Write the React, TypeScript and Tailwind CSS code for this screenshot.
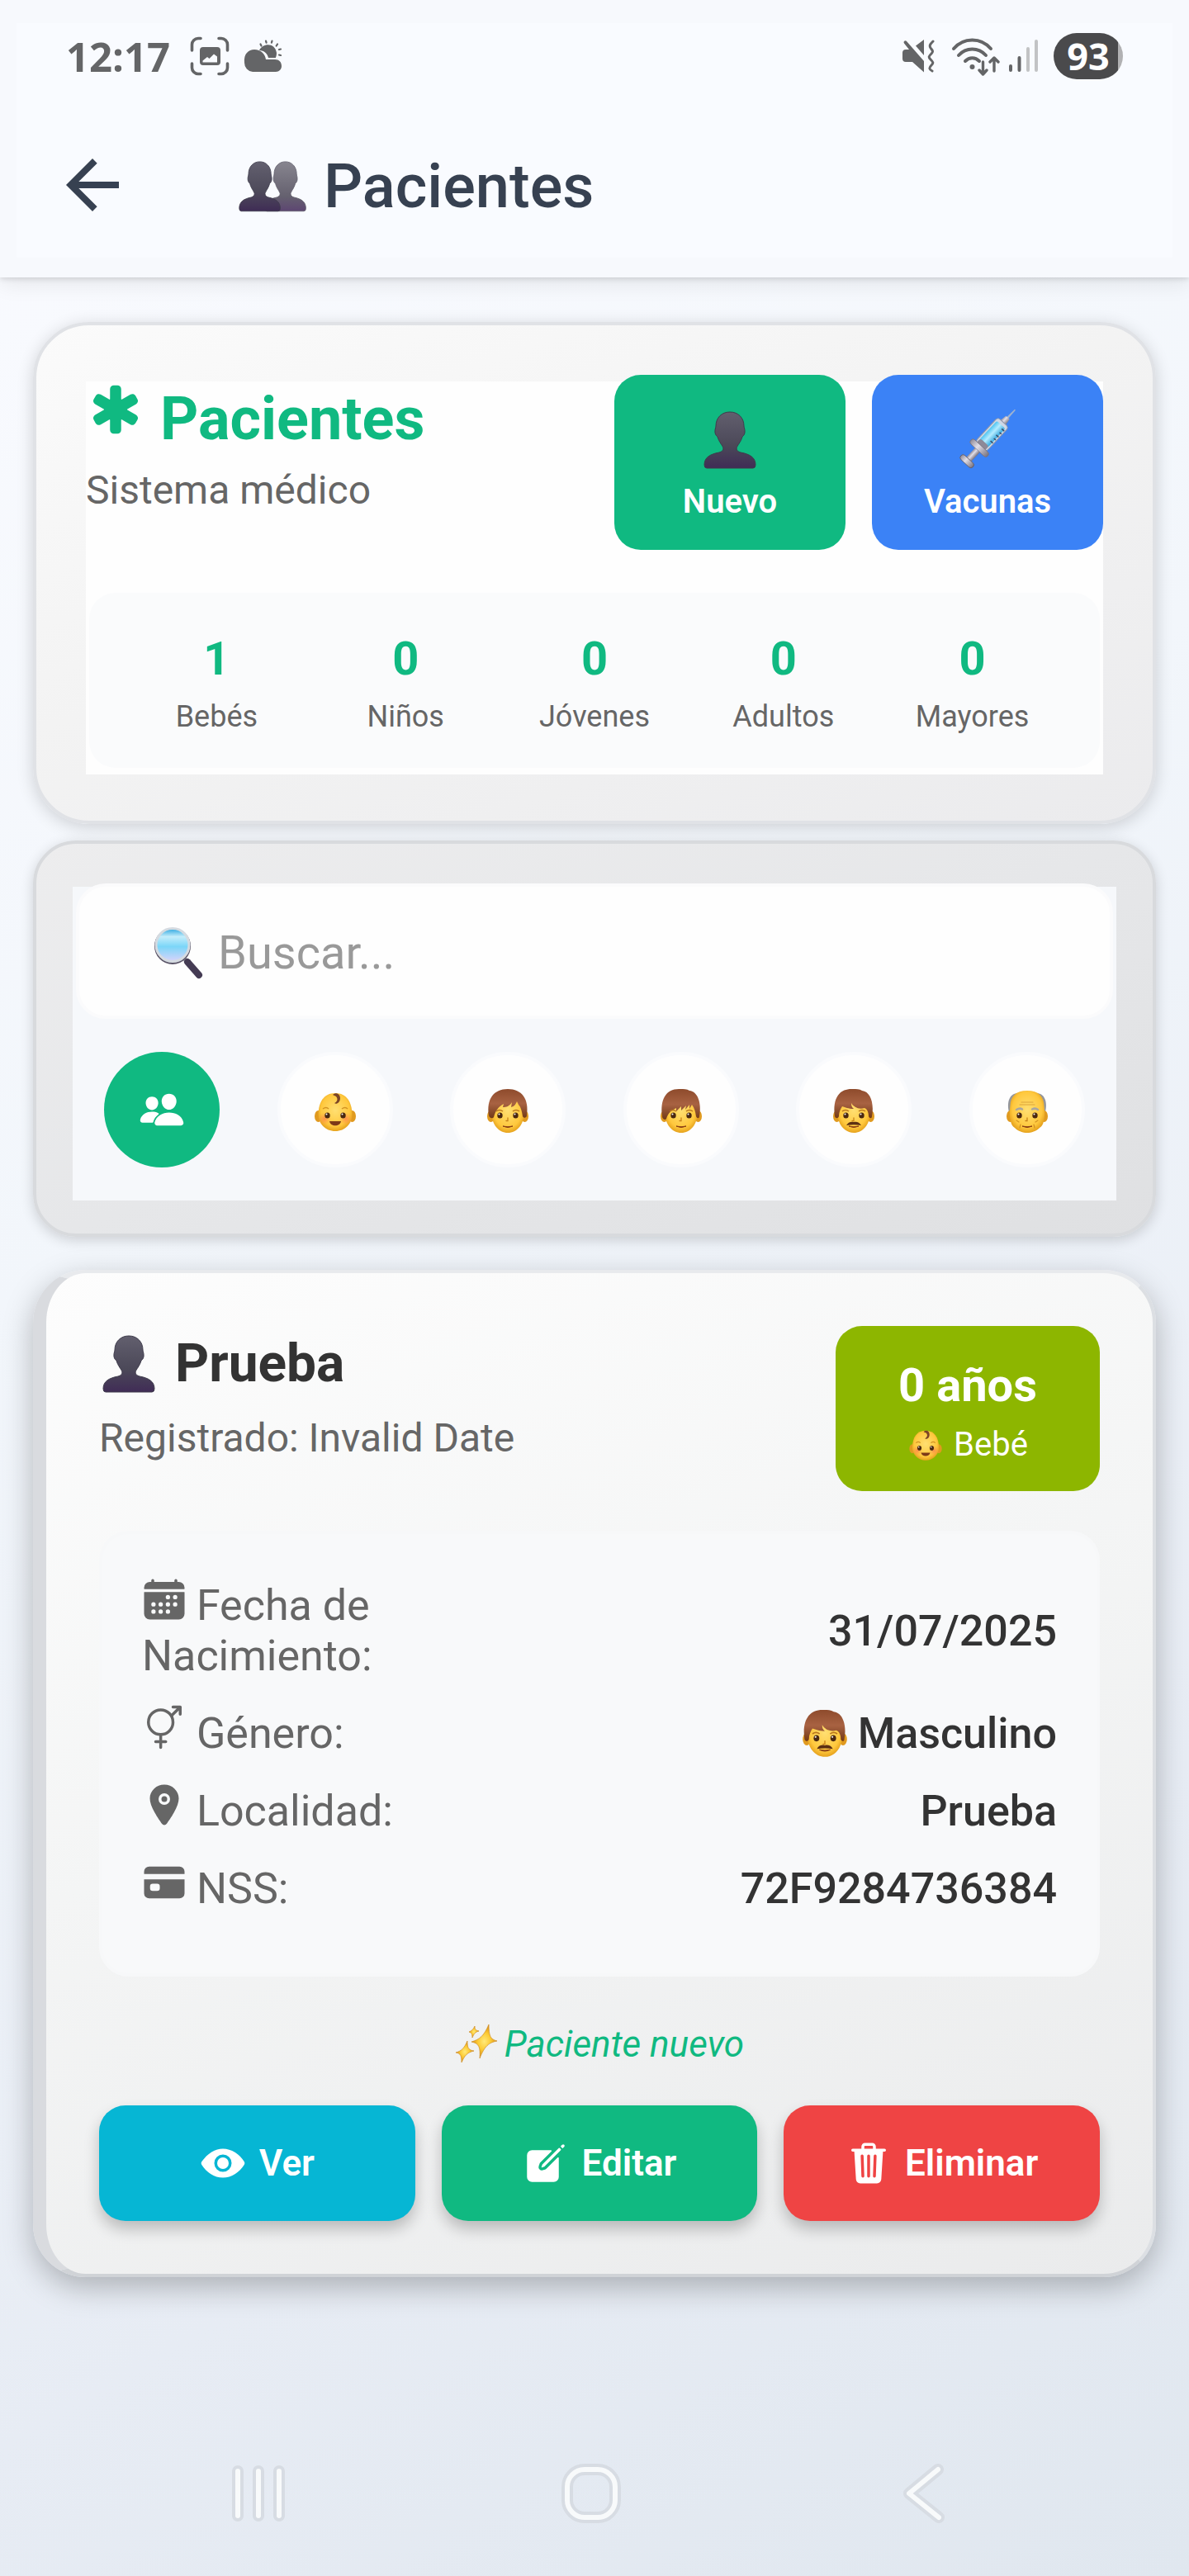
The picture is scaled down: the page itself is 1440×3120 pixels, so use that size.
import React from "react";
import { MdArrowBack } from "react-icons/md";
import {
  IoCalendar,
  IoCard,
  IoCreate,
  IoEye,
  IoLocation,
  IoMaleFemaleOutline,
  IoMedical,
  IoPeople,
  IoTrash,
} from "react-icons/io5";

/* ---------- status bar drawings ---------- */

function CaptureIcon() {
  return (
    <svg className="h-12 w-12" viewBox="0 0 48 48" fill="none" aria-hidden="true">
      <path
        d="M2.500 17V10a7.500 7.500 0 0 1 7.500-7.500h3M35 2.500h3a7.500 7.500 0 0 1 7.500 7.500v7M45.500 33v5a7.500 7.500 0 0 1-7.500 7.500h-3M13 45.500h-3A7.500 7.500 0 0 1 2.500 38v-5"
        stroke="#646567"
        strokeWidth="3.600"
        strokeLinecap="round"
      />
      <path
        fillRule="evenodd"
        d="M16 13h17a4 4 0 0 1 4 4v14a4 4 0 0 1-4 4H16a4 4 0 0 1-4-4V17a4 4 0 0 1 4-4Zm-.500 18.500H33v-7l-4-3-5.500 5.500-2.500-2-5.500 4.500Z"
        fill="#646567"
      />
    </svg>
  );
}

function WeatherIcon() {
  return (
    <svg className="h-10 w-12" viewBox="0 0 48 40" aria-hidden="true">
      <path d="M20 13c4-9 19-10 21 3 0 2-.300 4-1.200 6H31c-1-5-5-9-11-9Z" fill="#646567" />
      <path d="M12 39a11 11 0 0 1-10-11C1 17 7 12 14 12c8 0 13 5 14 12h11c5 0 8 3 8 8 0 4-3 7-7 7Z" fill="#646567" />
      <path
        d="M21.500 5.500l1 2M28 1.500l.6 2.200M35.500 1.500l-.6 2.200M42 5.500l-1.300 2M46 11.500l-2 .5M46 19l-2-.500"
        stroke="#646567"
        strokeWidth="2.200"
        strokeLinecap="round"
      />
    </svg>
  );
}

function MuteIcon() {
  return (
    <svg className="h-10 w-10" viewBox="0 0 40 40" fill="none" aria-hidden="true">
      <path d="M17 7.500 27 0v19L17 7.500Z" fill="#646567" />
      <path d="M5 12h4L3 4.500a1.800 1.800 0 0 1 3-2.500l21 24v13.500L13 27H5a4 4 0 0 1-4-4v-7a4 4 0 0 1 4-4Z" fill="#646567" />
      <path
        d="M38 2c-3 3-5 5-3 8s4 4 1 7-4 4-1 7 4 4 1 7-3 5 1 7"
        stroke="#646567"
        strokeWidth="3"
        strokeLinecap="round"
      />
    </svg>
  );
}

function WifiIcon() {
  return (
    <svg className="h-12 w-15" viewBox="0 0 60 48" fill="none" stroke="#646567" strokeLinecap="round" aria-hidden="true">
      <path d="M3 15C15 1 36 1 48 15M9 23c9-10 24-10 33 0M17 30c5-5 12-5 17 0" strokeWidth="4" />
      <circle cx="25.500" cy="37" r="3" fill="#646567" stroke="none" />
      <path d="M38.500 31v14M34 41l4.500 5 4.500-5M52 42V27M47 31l5-5 5 5" strokeWidth="3.400" strokeLinejoin="round" />
    </svg>
  );
}

function SignalIcon() {
  return (
    <svg className="h-10 w-10" viewBox="0 0 40 40" fill="none" strokeWidth="4" strokeLinecap="round" aria-hidden="true">
      <path d="M4 32v5M14.500 22v15" stroke="#646567" />
      <path d="M25 11v26M35 2v35" stroke="#c2c3c5" />
    </svg>
  );
}

function StatusBar() {
  return (
    <div className="flex h-14 items-center justify-between">
      <div className="flex items-center">
        <span className="font-['Open_Sans',sans-serif] text-[49px] leading-14 font-bold text-[#646567]">12:17</span>
        <span className="ml-6">
          <CaptureIcon />
        </span>
        <span className="ml-4">
          <WeatherIcon />
        </span>
      </div>
      <div className="flex items-center">
        <MuteIcon />
        <span className="ml-5">
          <WifiIcon />
        </span>
        <span className="ml-2">
          <SignalIcon />
        </span>
        <span className="ml-4 flex h-14 w-21 items-center justify-center rounded-full bg-[linear-gradient(90deg,#4a4a4c_93%,#b1b1b3_93%)] font-['Open_Sans',sans-serif] text-[45px] leading-14 font-bold text-white">
          93
        </span>
      </div>
    </div>
  );
}

/* ---------- emoji drawings ---------- */

const BUST =
  "M32 1C22 1 15 8 15 18c0 2-1.500 4-1 8 .5 3 2 4 3 5 2 7 6 10 7 14 0 3-2 4-5 5C8 52 1 56 1 65q0 4 3 4h56q3 0 3-4c0-9-7-13-18-15-3-1-5-2-5-5 1-4 5-7 7-14 1-1 2.500-2 3-5 .500-4-1-6-1-8C49 8 42 1 32 1Z";

function BustEmoji({ className }: { className: string }) {
  return (
    <svg className={className} viewBox="0 0 64 70" aria-hidden="true">
      <defs>
        <linearGradient id="bust" x1="0" y1="0" x2="0" y2="1">
          <stop offset="0" stopColor="#625f6e" />
          <stop offset="0.600" stopColor="#4b4858" />
          <stop offset="1" stopColor="#402c56" />
        </linearGradient>
      </defs>
      <path d={BUST} fill="url(#bust)" stroke="#3e3b4b" strokeWidth="1" />
    </svg>
  );
}

function BustsEmoji() {
  return (
    <svg className="h-16 w-[84px]" viewBox="0 0 84 64" aria-hidden="true">
      <defs>
        <linearGradient id="busts-back" x1="0" y1="0" x2="0" y2="1">
          <stop offset="0" stopColor="#87858f" />
          <stop offset="0.700" stopColor="#65616f" />
          <stop offset="1" stopColor="#5d4672" />
        </linearGradient>
        <linearGradient id="busts-front" x1="0" y1="0" x2="0" y2="1">
          <stop offset="0" stopColor="#63606f" />
          <stop offset="0.600" stopColor="#4d4a5a" />
          <stop offset="1" stopColor="#3f2c55" />
        </linearGradient>
      </defs>
      <g transform="translate(32 1) scale(0.800 0.880)">
        <path d={BUST} fill="url(#busts-back)" stroke="#625f6d" />
      </g>
      <g transform="translate(1 1) scale(0.800 0.880)">
        <path d={BUST} fill="url(#busts-front)" stroke="#3e3b4b" />
      </g>
    </svg>
  );
}

function SyringeEmoji() {
  return (
    <svg className="h-19 w-19" viewBox="0 0 76 76" aria-hidden="true">
      <defs>
        <linearGradient id="serum" x1="0" y1="0" x2="1" y2="0">
          <stop offset="0" stopColor="#4cc4f2" />
          <stop offset="0.450" stopColor="#b5ecff" />
          <stop offset="1" stopColor="#37a9df" />
        </linearGradient>
        <linearGradient id="steel" x1="0" y1="0" x2="1" y2="0">
          <stop offset="0" stopColor="#8f8b99" />
          <stop offset="0.400" stopColor="#e2dfe8" />
          <stop offset="1" stopColor="#77727f" />
        </linearGradient>
      </defs>
      <g transform="rotate(43 38 38)">
        <path d="M37.300 -11h1.400L39.500 6h-3Z" fill="#9fb3cf" />
        <path d="M35 2h6l1.500 9h-9Z" fill="url(#steel)" />
        <rect x="29" y="10" width="18" height="40" rx="4" fill="#cfd8e6" stroke="#8f97aa" />
        <rect x="31" y="14" width="14" height="31" rx="2" fill="url(#serum)" />
        <path d="M46 17h-4M46 22h-3M46 27h-4M46 32h-3M46 37h-4" stroke="#3b4c68" strokeWidth="1.500" />
        <rect x="31" y="43" width="14" height="8" rx="3" fill="#8d8998" />
        <rect x="24" y="49" width="28" height="7" rx="3.500" fill="url(#steel)" stroke="#77737f" strokeWidth="0.800" />
        <rect x="34" y="56" width="8" height="16" fill="url(#steel)" />
        <rect x="28" y="71" width="20" height="7" rx="3.500" fill="url(#steel)" stroke="#5f5a68" strokeWidth="0.800" />
      </g>
    </svg>
  );
}

function SearchEmoji() {
  return (
    <svg className="h-16 w-16" viewBox="0 0 64 64" aria-hidden="true">
      <defs>
        <linearGradient id="lens" x1="0" y1="0" x2="0" y2="1">
          <stop offset="0" stopColor="#2aa5df" />
          <stop offset="0.250" stopColor="#c4edfb" />
          <stop offset="0.550" stopColor="#7bd6f8" />
          <stop offset="1" stopColor="#d9d3fb" />
        </linearGradient>
      </defs>
      <path d="m38 38 6 6" stroke="#a4a4ac" strokeWidth="5" />
      <path d="m43 43 14 16" stroke="#443b53" strokeWidth="8" strokeLinecap="round" />
      <circle cx="25" cy="24" r="20.500" fill="none" stroke="#5b5568" strokeWidth="3" />
      <circle cx="25" cy="22.500" r="20" fill="url(#lens)" stroke="#d5dbe1" strokeWidth="3" />
    </svg>
  );
}

type FaceKind = "baby" | "child" | "young" | "adult" | "elder";

function FaceEmoji({ kind, className }: { kind: FaceKind; className: string }) {
  return (
    <svg className={className} viewBox="0 0 52 56" aria-hidden="true">
      <defs>
        <radialGradient id="skin" cx="0.500" cy="0.450" r="0.600">
          <stop offset="0" stopColor="#ffdf72" />
          <stop offset="0.700" stopColor="#ffc83d" />
          <stop offset="1" stopColor="#dd9512" />
        </radialGradient>
        <radialGradient id="cheek">
          <stop offset="0" stopColor="#ff7c4c" stopOpacity="0.750" />
          <stop offset="1" stopColor="#ff9a4c" stopOpacity="0" />
        </radialGradient>
        <linearGradient id="hair" x1="0" y1="0" x2="0" y2="1">
          <stop offset="0" stopColor="#8e4b2c" />
          <stop offset="0.500" stopColor="#a86242" />
          <stop offset="1" stopColor="#713917" />
        </linearGradient>
      </defs>
      {kind === "elder" && <path d="M4 29C1 16 5 6 15 6v23ZM48 29c3-13-1-23-11-23v23Z" fill="#94969b" />}
      <ellipse cx="5.500" cy="34" rx="4.500" ry="7" fill="#e09a1f" />
      <ellipse cx="46.500" cy="34" rx="4.500" ry="7" fill="#e09a1f" />
      {kind === "baby" && (
        <path d="M26 6C12 6 6 17 5.500 31 5.500 43 14 52 26 52s20.500-9 20.500-21C46 17 40 6 26 6Z" fill="url(#skin)" />
      )}
      {kind === "elder" && (
        <path d="M26 3C12 3 6 10 5.500 21c-1 8-1 13 .5 19 1 4 2 6 5 8 4 4 10 6 15 6s11-2 15-6c3-2 4-4 5-8 1.500-6 1.500-11 .5-19C46 10 40 3 26 3Z" fill="url(#skin)" />
      )}
      {(kind === "child" || kind === "young" || kind === "adult") && (
        <path d="M26 4C12 4 6 13 6 28c0 16 9 26 20 26s20-10 20-26C46 13 40 4 26 4Z" fill="url(#skin)" />
      )}
      {kind === "baby" && (
        <>
          <circle cx="13" cy="37" r="8" fill="url(#cheek)" />
          <circle cx="39" cy="37" r="8" fill="url(#cheek)" />
          <path d="M23 8c4-4 9-1 9 4 0 6-5 8-7 6 3-1 5-5 2-8-1-1-3-1-4-2Z" fill="#7b4526" />
          <path d="M19 40h14c-1 7-13 7-14 0Z" fill="#7d3a18" />
          <path d="M11 25q4-3 7 0M34 25q4-3 7 0" fill="none" stroke="#d39322" strokeWidth="1.500" />
        </>
      )}
      {kind === "child" && (
        <path d="M3 33C0 13 9 1 26 1s26 12 23 32c0 3-4 4-5 1-1-6-2-11-5-14l-2-4c-2 5-4 6-7 7l1-6c-3 5-7 6-11 6l1-4c-6 3-10 8-12 16-1 2-5 2-6-2Z" fill="url(#hair)" />
      )}
      {kind === "young" && (
        <path d="M3 34C0 13 8 0 25 1c4 0 8 0 11 2 10 1 15 15 12 31 0 3-3 3-4 0-1-6-2-10-5-14l-3 5 0-5-5 6 1-5-6 6v-5l-6 6v-4c-6 3-10 6-12 13-1 2-4 1-5-2Z" fill="url(#hair)" />
      )}
      {kind === "adult" && (
        <path d="M3 34C0 13 8 0 25 1c4 0 8 0 11 2 10 1 15 15 12 31 0 3-3 3-4 0 0-5-2-9-5-10-7 2-13-1-16-6 0 4 1 5 3 7-7 0-10-2-14-3-2 3-4 7-4 12-1 3-4 3-5 0Z" fill="url(#hair)" />
      )}
      {kind === "elder" && (
        <>
          <path d="M19 17h14M17 20h18" fill="none" stroke="#dca43a" strokeWidth="1.200" strokeLinecap="round" />
          <path d="M13 26q4-2.500 7-.5M32 25.500q4-2 7 .5" fill="none" stroke="#a9a6a0" strokeWidth="2.500" strokeLinecap="round" />
          <path d="M13 39l3 2M39 39l-3 2M18 44l-1 4M34 44l1 4" fill="none" stroke="#d39322" strokeWidth="1.200" strokeLinecap="round" />
        </>
      )}
      {(kind === "child" || kind === "young" || kind === "adult") && (
        <path d="M12 28q4-3 8 0M32 28q4-3 8 0" fill="none" stroke="#b9761d" strokeWidth="1.500" />
      )}
      <ellipse cx="16.500" cy="33" rx="3.200" ry="3.600" fill="#4a2810" />
      <ellipse cx="35.500" cy="33" rx="3.200" ry="3.600" fill="#4a2810" />
      <circle cx="15.500" cy="31.500" r="1" fill="#fff" />
      <circle cx="34.500" cy="31.500" r="1" fill="#fff" />
      {kind !== "baby" && (
        <>
          <path d="M26 36v3.500h-2" fill="none" stroke="#c98419" strokeWidth="1.300" strokeLinecap="round" />
          <path d="M20 46q6 3 12 0-6 1.500-12 0Z" fill="#8b3f14" stroke="#8b3f14" strokeLinejoin="round" />
        </>
      )}
      {kind === "adult" && <path d="M17 45c2-4 6-5 9-4 3-1 7 0 9 4-6-1-12-1-18 0Z" fill="#5c3013" />}
    </svg>
  );
}

function SparklesEmoji() {
  return (
    <svg className="mr-2 -mt-2 inline-block h-13 w-13 align-[-10px]" viewBox="0 0 52 52" aria-hidden="true">
      <defs>
        <radialGradient id="gold">
          <stop offset="0" stopColor="#ffe97a" />
          <stop offset="0.500" stopColor="#fccb35" />
          <stop offset="1" stopColor="#d98c12" />
        </radialGradient>
      </defs>
      <g fill="url(#gold)" stroke="#cf8f2a" strokeWidth="0.700" strokeLinejoin="round">
        <path d="M41 3c0 14 2 18 10 20-10 2-15 6-21 21 1-14-1-18-10-20 10-3 15-7 21-21Z" />
        <path d="M15 23c0 8 1 11 8 12-8 2-11 5-15 14 0-8-1-11-7-12 7-2 10-5 14-14Z" />
        <path d="M24 5c0 4 1 5 5 6-4 1-6 3-8 8 0-5-1-6-4-7 3-1 5-3 7-7Z" />
      </g>
    </svg>
  );
}

/* ---------- page parts ---------- */

function Header() {
  return (
    <header className="relative bg-[#f7f9fd] px-5 pt-7 pb-6 shadow-[0_2px_6px_rgba(0,0,0,0.12),0_8px_24px_rgba(0,0,0,0.08)]">
      <div className="bg-[#f9fbff] px-15 pt-3 pb-10">
        <StatusBar />
        <div className="mt-20 flex h-24 items-center">
          <button type="button" aria-label="Volver" className="-ml-4 text-[#374151]">
            <MdArrowBack className="h-24 w-24" />
          </button>
          <h1 className="ml-32 flex items-center gap-5 pt-1 text-[74px] leading-21 font-medium text-[#374151]">
            <BustsEmoji />
            Pacientes
          </h1>
        </div>
      </div>
    </header>
  );
}

const stats = [
  { label: "Bebés", value: 1 },
  { label: "Niños", value: 0 },
  { label: "Jóvenes", value: 0 },
  { label: "Adultos", value: 0 },
  { label: "Mayores", value: 0 },
];

function SummaryCard() {
  return (
    <section className="rounded-[68px] border-4 border-[#e0e2e6] bg-[linear-gradient(160deg,#fbfbfb,#f3f3f3_45%,#ebebed)] bg-origin-border px-15 pt-17 pb-14 shadow-[0_4px_20px_rgba(0,0,0,0.16)]">
      <div className="flow-root bg-[#fefefe] pb-2">
        <div className="-mt-2 flex items-start justify-between">
          <div className="pt-3">
            <h2 className="text-[72px] leading-21 font-bold text-[#10b981]">
              <IoMedical className="-mt-3 inline-block h-18 w-18 align-baseline" /> Pacientes
            </h2>
            <p className="mt-4 text-[48px] leading-14 text-[#666666]">Sistema médico</p>
          </div>
          <div className="flex gap-8">
            <button type="button" className="flex h-53 w-70 flex-col items-center rounded-[32px] bg-[#10b981] pt-11 text-[40px] leading-12 font-semibold text-white">
              <BustEmoji className="mb-4 h-17.5 w-16" />
              Nuevo
            </button>
            <button type="button" className="flex h-53 w-70 flex-col items-center rounded-[32px] bg-[#3b82f6] pt-10 text-[40px] leading-12 font-semibold text-white">
              <span className="mb-3.5">
                <SyringeEmoji />
              </span>
              Vacunas
            </button>
          </div>
        </div>
        <dl className="mx-1 mt-13 grid grid-cols-5 rounded-[32px] bg-[#fafbfc] px-10 pt-12 pb-10 text-center">
          {stats.map((s) => (
            <div key={s.label} className="flex flex-col-reverse">
              <dt className="mt-4 text-[36px] leading-11 text-[#666666]">{s.label}</dt>
              <dd className="text-[56px] leading-16 font-bold text-[#10b981]">{s.value}</dd>
            </div>
          ))}
        </dl>
      </div>
    </section>
  );
}

const filters: { kind: FaceKind; label: string }[] = [
  { kind: "baby", label: "Bebés" },
  { kind: "child", label: "Niños" },
  { kind: "young", label: "Jóvenes" },
  { kind: "adult", label: "Adultos" },
  { kind: "elder", label: "Mayores" },
];

function FilterCard() {
  return (
    <section className="mt-5 rounded-[52px] border-4 border-[#d8dadd] bg-[linear-gradient(160deg,#ededee,#e6e7e9_50%,#dfe0e2)] bg-origin-border px-11 pt-13 pb-10 shadow-[0_4px_16px_rgba(0,0,0,0.16)]">
      <div className="flow-root bg-[#f6f8fb] pb-10">
        <label
          htmlFor="buscar"
          className="-mt-1 mx-1 flex h-41 items-center rounded-[36px] border-4 border-[#fbfbfc] bg-[#fefefe] px-22 pt-1"
        >
          <SearchEmoji />
          <input
            id="buscar"
            type="text"
            aria-label="Buscar pacientes"
            placeholder="Buscar..."
            className="ml-4 h-20 min-w-0 flex-1 bg-transparent text-[56px] leading-20 text-[#333333] outline-none placeholder:text-[#999999]"
          />
        </label>
        <div className="mt-10 flex justify-between px-9.5">
          <button type="button" aria-label="Todos" className="flex h-35 w-35 items-center justify-center rounded-full bg-[#10b981] text-white">
            <IoPeople className="h-14 w-14" />
          </button>
          {filters.map((f) => (
            <button
              key={f.kind}
              type="button"
              aria-label={f.label}
              className="flex h-35 w-35 items-center justify-center rounded-full border-4 border-[#fafbfd] bg-[#fefefe] pt-1"
            >
              <FaceEmoji kind={f.kind} className="h-14 w-13" />
            </button>
          ))}
        </div>
      </div>
    </section>
  );
}

function InfoRow({ icon, label, children }: { icon: React.ReactNode; label: string; children: React.ReactNode }) {
  return (
    <div className="flex items-center justify-between text-[52px] leading-[61px]">
      <dt className="w-[40%] text-[#666666]">
        {icon} {label}
      </dt>
      <dd className="flex items-center gap-3 font-medium text-[#333333]">{children}</dd>
    </div>
  );
}

const rowIcon = "-mt-3 -mr-0.5 -ml-px inline-block h-14 w-14 align-[-3px]";

const actionButton =
  "flex h-35 items-center justify-center gap-4 rounded-[32px] text-[44px] leading-13 font-semibold text-white shadow-[0_10px_18px_rgba(0,0,0,0.22)]";

function PatientCard() {
  return (
    <article className="mt-10 rounded-[64px] border-4 border-l-16 border-t-[#e8eaed] border-r-[#dcdfe3] border-b-[#d0d3d7] border-l-[#d9dbdf] bg-[linear-gradient(160deg,#fdfdfd,#f4f5f5_45%,#eaebec)] bg-origin-border p-16 shadow-[0_12px_36px_rgba(0,0,0,0.26)]">
      <div className="flex items-start justify-between">
        <div className="pt-2">
          <h3 className="flex items-center gap-6 text-[64px] leading-19 font-bold text-[#333333]">
            <BustEmoji className="ml-1 h-17.5 w-16" />
            Prueba
          </h3>
          <p className="mt-6 text-[48px] leading-14 text-[#666666]">Registrado: Invalid Date</p>
        </div>
        <div className="flex w-80 flex-col items-center rounded-[32px] bg-[#8db600] pt-10 pb-8 text-white">
          <span className="text-[56px] leading-16 font-bold">0 años</span>
          <span className="mt-4 flex items-center gap-3 text-[40px] leading-12">
            <FaceEmoji kind="baby" className="h-11 w-11" />
            Bebé
          </span>
        </div>
      </div>

      <dl className="mt-12 flex flex-col gap-[33px] rounded-[36px] border-4 border-[#f7f8f9] bg-[#f8f9fa] px-12 pt-14 pb-18">
        <InfoRow icon={<IoCalendar className={rowIcon} />} label="Fecha de Nacimiento:">
          31/07/2025
        </InfoRow>
        <InfoRow icon={<IoMaleFemaleOutline className={rowIcon} />} label="Género:">
          <FaceEmoji kind="adult" className="h-15 w-14" />
          Masculino
        </InfoRow>
        <InfoRow icon={<IoLocation className={rowIcon} />} label="Localidad:">
          Prueba
        </InfoRow>
        <InfoRow icon={<IoCard className={rowIcon} />} label="NSS:">
          72F9284736384
        </InfoRow>
      </dl>

      <p className="mt-14 text-center text-[44px] leading-13 text-[#10b981] italic">
        <SparklesEmoji />
        Paciente nuevo
      </p>

      <div className="mt-12 grid grid-cols-3 gap-8">
        <button type="button" className={`${actionButton} bg-[#06b6d4]`}>
          <IoEye className="h-14 w-14" />
          Ver
        </button>
        <button type="button" className={`${actionButton} bg-[#10b981]`}>
          <IoCreate className="h-14 w-14" />
          Editar
        </button>
        <button type="button" className={`${actionButton} bg-[#ef4444]`}>
          <IoTrash className="h-14 w-14" />
          Eliminar
        </button>
      </div>
    </article>
  );
}

const navIcons = [
  { label: "Recientes", d: "M11 9v54M36 9v54M61 9v54" },
  { label: "Inicio", d: "M28 7h16a21 21 0 0 1 21 21v16a21 21 0 0 1-21 21H28A21 21 0 0 1 7 44V28A21 21 0 0 1 28 7Z" },
  { label: "Atrás", d: "M53 7 18 36l36 29" },
];

function NavigationBar() {
  return (
    <nav aria-label="Sistema" className="mt-auto grid grid-cols-3 pr-30 pb-16 pl-28">
      {navIcons.map((n) => (
        <button key={n.label} type="button" aria-label={n.label} className="flex justify-center">
          <svg className="h-18 w-18" viewBox="0 0 72 72" fill="none" strokeLinecap="round" strokeLinejoin="round" aria-hidden="true">
            <path d={n.d} stroke="#d7dce3" strokeWidth="14" />
            <path d={n.d} stroke="#f8fafb" strokeWidth="6" />
          </svg>
        </button>
      ))}
    </nav>
  );
}

export default function App() {
  return (
    <div className="flex min-h-screen flex-col bg-[linear-gradient(150deg,#fafbff,#f2f6fb_40%,#e7ecf4_75%,#e0e7ef)] font-[Roboto,sans-serif]">
      <Header />
      <main className="px-10 pt-[54px] pb-16">
        <SummaryCard />
        <FilterCard />
        <PatientCard />
      </main>
      <NavigationBar />
    </div>
  );
}
